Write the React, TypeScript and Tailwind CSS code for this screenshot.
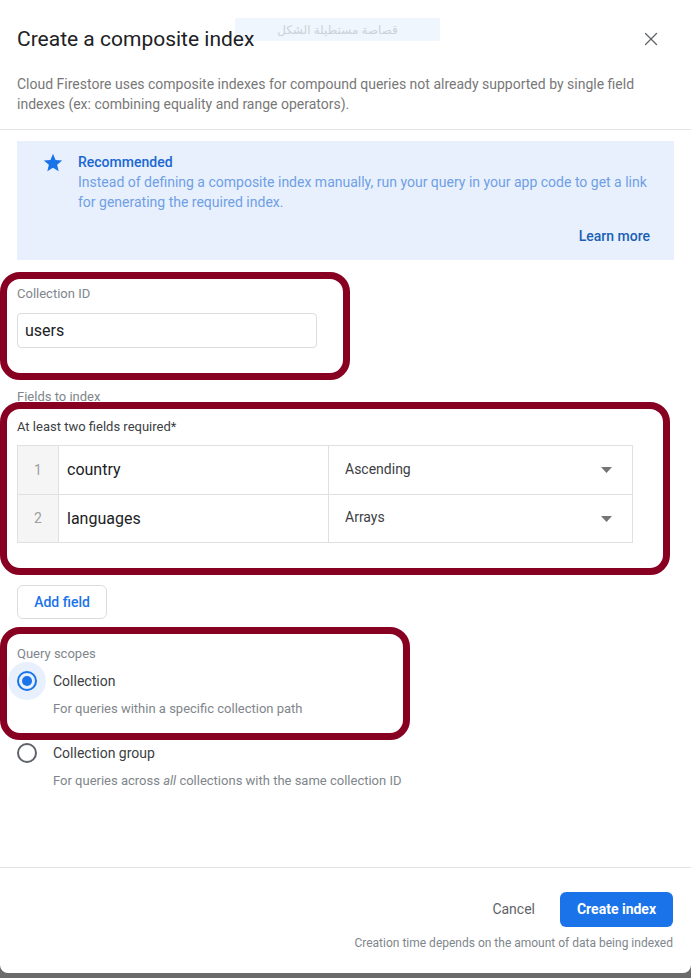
import { X } from "lucide-react";

const font = { fontFamily: "Roboto, 'Noto Sans', Arial, sans-serif" };

function Star() {
  return (
    <svg width="22" height="22" viewBox="0 0 24 24" className="shrink-0">
      <path
        fill="#1a73e8"
        d="M12 17.27 18.18 21l-1.64-7.03L22 9.24l-7.19-.61L12 2 9.19 8.63 2 9.24l5.46 4.73L5.82 21z"
      />
    </svg>
  );
}

function Caret() {
  return (
    <svg width="11" height="6" viewBox="0 0 11 6">
      <path d="M0 0h11L5.5 6z" fill="#757575" />
    </svg>
  );
}

function Radio({ checked }: { checked?: boolean }) {
  return (
    <div className="relative w-5 h-5 shrink-0">
      {checked && (
        <div className="absolute -left-[9px] -top-[9px] w-[38px] h-[38px] rounded-full bg-[#e8f0fe]" />
      )}
      <div
        className={`relative w-5 h-5 rounded-full border-2 flex items-center justify-center ${
          checked ? "border-[#1a73e8]" : "border-[#5f6368]"
        }`}
      >
        {checked && <div className="w-[10px] h-[10px] rounded-full bg-[#1a73e8]" />}
      </div>
    </div>
  );
}

const fields = [
  { n: 1, name: "country", mode: "Ascending" },
  { n: 2, name: "languages", mode: "Arrays" },
];

export default function App() {
  return (
    <div className="relative w-[691px] h-[978px] overflow-hidden bg-[#6b6b6b]" style={font}>
      {/* Snipping tool overlay */}
      <div
        className="absolute left-[235px] top-[18px] w-[205px] h-[23px] bg-[#f0f6fe] flex items-center justify-center text-[12px] text-[#ccd1d8] z-10"
        style={{ fontFamily: "'Noto Sans', 'DejaVu Sans', sans-serif" }}
        dir="rtl"
      >
        قصاصة مستطيلة الشكل
      </div>

      <div className="h-[973px] bg-white rounded-b-lg flex flex-col">
        {/* Header */}
        <div className="relative z-20 pt-[25px] pl-[17px] pr-[29px] flex items-center justify-between">
          <h1 className="text-[21px] leading-[28px] text-[#202124]">Create a composite index</h1>
          <X size={22} strokeWidth={1.4} className="text-[#5f6368]" />
        </div>
        <div className="px-[17px] mt-[21px] pb-[15px] border-b border-[#e3e3e3]">
          <p className="text-[14px] leading-[20px] text-[#787878]">
            Cloud Firestore uses composite indexes for compound queries not already supported by single field
            indexes (ex: combining equality and range operators).
          </p>
        </div>

        {/* Recommended */}
        <div className="mx-[17px] mt-[11px] h-[119px] bg-[#e8f0fe] pl-[25px] pr-[24px] pt-[11px]">
          <div className="flex gap-[14px]">
            <Star />
            <div className="flex-1">
              <div className="text-[14px] leading-[20px] font-medium text-[#1967d2]">Recommended</div>
              <p className="text-[14px] leading-[20px] text-[#6f9fe4]">
                Instead of defining a composite index manually, run your query in your app code to get a link
                for generating the required index.
              </p>
              <div className="mt-[14px] text-right text-[14px] leading-[20px] font-medium text-[#1a5fb4]">
                Learn more
              </div>
            </div>
          </div>
        </div>

        {/* Collection ID */}
        <div className="px-[17px]">
          <div className="mt-[26px] text-[13px] leading-[16px] text-[#80868b]">Collection ID</div>
          <div className="mt-[11px] w-[300px] h-[35px] border border-[#dadce0] rounded flex items-center px-[7px] text-[16px] text-[#202124]">
            users
          </div>

          <div className="mt-[41px] text-[13px] leading-[16px] text-[#80868b]">Fields to index</div>
          <div className="mt-[13px] text-[13px] leading-[18px] text-[#3c4043]">At least two fields required*</div>

          <div className="mt-[9px] w-[616px] border border-[#e0e0e0]">
            {fields.map((f, i) => (
              <div
                key={f.n}
                className={`flex h-[48px] ${i > 0 ? "border-t border-[#e0e0e0]" : ""}`}
              >
                <div className="w-[41px] bg-[#f5f5f5] border-r border-[#e0e0e0] flex items-center justify-center text-[14px] text-[#9e9e9e]">
                  {f.n}
                </div>
                <div className="w-[270px] border-r border-[#e0e0e0] flex items-center pl-[8px] text-[16px] text-[#202124]">
                  {f.name}
                </div>
                <div className="flex-1 flex items-center justify-between pl-[16px] pr-[20px] text-[14px] text-[#3c4043]">
                  <span className="-mt-[2px]">{f.mode}</span>
                  <Caret />
                </div>
              </div>
            ))}
          </div>

          <button className="mt-[42px] w-[90px] h-[34px] border border-[#dadce0] rounded-md text-[14px] font-medium text-[#1a73e8]">
            Add field
          </button>

          <div className="mt-[27px] text-[13px] leading-[16px] text-[#80868b]">Query scopes</div>

          <div className="mt-[9px] flex items-center gap-[16px]">
            <Radio checked />
            <span className="text-[14px] leading-[20px] text-[#3c4043]">Collection</span>
          </div>
          <div className="mt-[10px] pl-[36px] text-[13px] leading-[16px] text-[#80868b]">
            For queries within a specific collection path
          </div>

          <div className="mt-[26px] flex items-center gap-[16px]">
            <Radio />
            <span className="text-[14px] leading-[20px] text-[#3c4043]">Collection group</span>
          </div>
          <div className="mt-[10px] pl-[36px] text-[13px] leading-[16px] text-[#80868b]">
            For queries across <i>all</i> collections with the same collection ID
          </div>
        </div>

        {/* Footer */}
        <div className="mt-auto border-t border-[#e3e3e3] pt-[24px] pb-[22px] px-[18px] flex flex-col items-end">
          <div className="flex items-center gap-[25px]">
            <span className="text-[14px] text-[#5f6368]">Cancel</span>
            <button className="w-[113px] h-[35px] rounded-md bg-[#1a73e8] text-white text-[14px] font-bold">
              Create index
            </button>
          </div>
          <div className="mt-[8px] text-[12px] leading-[16px] text-[#80868b]">
            Creation time depends on the amount of data being indexed
          </div>
        </div>
      </div>

      {/* Annotations */}
      <div className="absolute left-0 top-[272px] w-[350px] h-[108px] border-[7px] border-[#870022] rounded-[20px]" />
      <div className="absolute left-0 top-[402px] w-[670px] h-[173px] border-[7px] border-[#870022] rounded-[20px]" />
      <div className="absolute left-0 top-[627px] w-[410px] h-[113px] border-[7px] border-[#870022] rounded-[20px]" />
    </div>
  );
}
